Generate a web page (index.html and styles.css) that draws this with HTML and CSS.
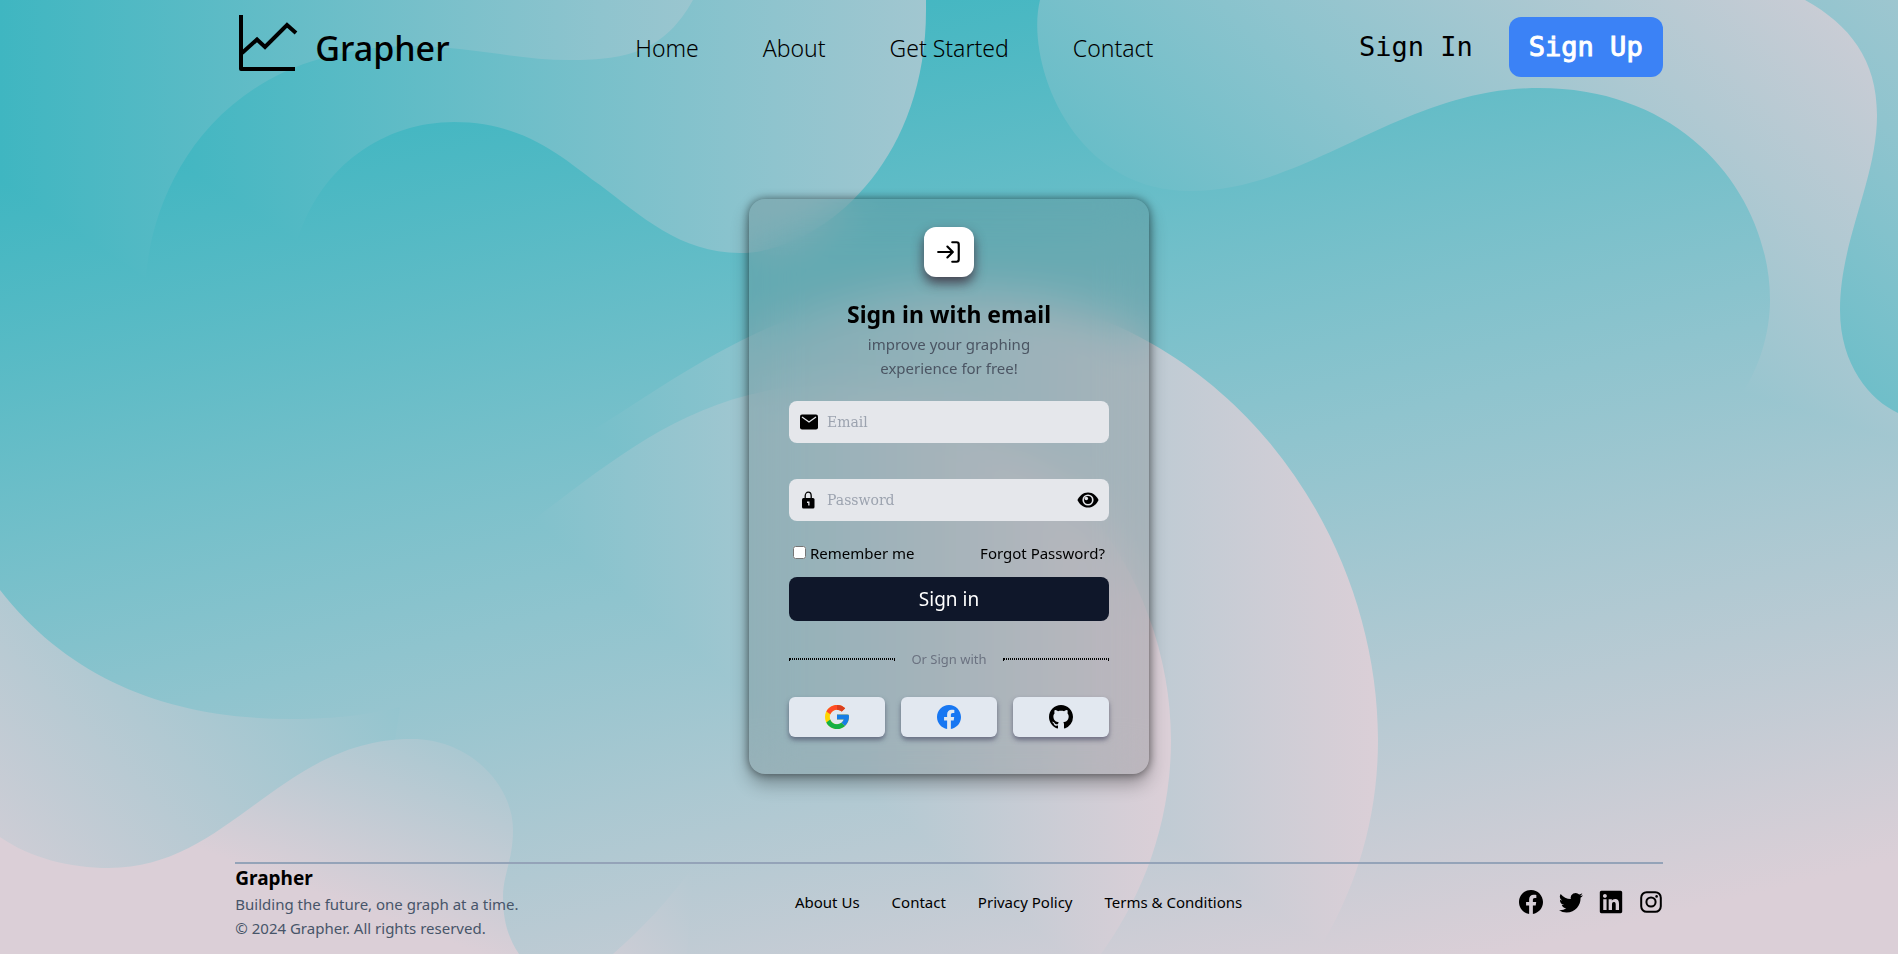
FILE: index.html
```html
<!DOCTYPE html>
<html lang="en">
<head>
<meta charset="utf-8">
<meta name="viewport" content="width=device-width, initial-scale=1">
<title>Grapher</title>
<link rel="stylesheet" href="styles.css">
</head>
<body>
<svg class="backdrop" viewBox="0 0 1898 954" preserveAspectRatio="none" aria-hidden="true">
  <defs>
    <linearGradient id="tones"><stop offset="0" stop-color="#3fb6c1"/><stop offset=".5" stop-color="#8fc4ce"/><stop offset="1" stop-color="#dbcfd7"/></linearGradient>
    <linearGradient id="base" href="#tones" gradientUnits="userSpaceOnUse" x1="0" y1="180" x2="258" y2="1254"/>
    <linearGradient id="tl1" href="#tones" gradientUnits="userSpaceOnUse" x1="0" y1="0" x2="1205" y2="0"/>
    <linearGradient id="tl2" href="#tones" gradientUnits="userSpaceOnUse" x1="150" y1="0" x2="1400" y2="0"/>
    <linearGradient id="tr1" href="#tones" gradientUnits="userSpaceOnUse" x1="1239" y1="681" x2="1953" y2="-33"/>
    <linearGradient id="tr2" href="#tones" gradientUnits="userSpaceOnUse" x1="1473" y1="427" x2="2187" y2="-287"/>
    <linearGradient id="mid1" href="#tones" gradientUnits="userSpaceOnUse" x1="174" y1="0" x2="1378" y2="0"/>
    <linearGradient id="mid2" href="#tones" gradientUnits="userSpaceOnUse" x1="90" y1="0" x2="1165" y2="0"/>
    <linearGradient id="bl1" href="#tones" gradientUnits="userSpaceOnUse" x1="628" y1="172" x2="-86" y2="886"/>
    <linearGradient id="bl2" href="#tones" gradientUnits="userSpaceOnUse" x1="551" y1="370" x2="352" y2="906"/>
    <linearGradient id="bl3" href="#tones" gradientUnits="userSpaceOnUse" x1="1110" y1="449" x2="554" y2="1005"/>
  </defs>
  <rect width="1898" height="954" fill="url(#base)"/>
  <path fill="url(#tl2)" d="M160 0V150L297 242C320 165 385 122 454 122C530 122 570 165 600 185C640 215 680 253 740 253C815 253 926 170 926 10V0Z"/>
  <path fill="url(#tl1)" d="M0 0V180L146 278C152 190 215 48 410 46C470 46 515 60 570 60C630 60 665 50 693 0Z"/>
  <path fill="url(#tr1)" d="M1040 0C1025 60 1070 191 1190 191C1310 191 1400 88 1539 88C1690 88 1770 200 1770 300C1770 335 1758 370 1742 393L1898 440V0Z"/>
  <path fill="url(#tr2)" d="M1805 0C1850 25 1877 60 1877 115C1877 180 1840 240 1840 310C1840 365 1870 400 1898 413V0Z"/>
  <path fill="url(#mid1)" d="M590 432C690 370 790 290 945 290C1210 290 1378 520 1378 740C1378 820 1355 890 1321 946Z"/>
  <path fill="url(#mid2)" d="M533 520C620 455 700 385 830 385C1030 385 1171 560 1171 740C1171 840 1130 920 1087 972Z"/>
  <path fill="url(#bl1)" d="M0 590C70 680 170 719 291 719C340 719 370 714 400 707L392 760L380 954H0Z"/>
  <path fill="url(#bl2)" d="M0 837C30 858 70 868 109 868C230 868 280 739 412 739C470 739 513 785 513 830C513 860 503 875 503 897C503 920 508 938 519 954H0Z"/>
  <path fill="url(#bl3)" d="M694 865C670 900 640 930 613 954H687Z"/>
</svg>

<div class="page">
  <header class="header">
    <a class="brand" href="#">
      <svg class="brand-icon" viewBox="0 0 64 64" fill="none" stroke="currentColor" stroke-width="4" stroke-linejoin="round" aria-hidden="true">
        <path d="M6 3V57H60"/><path d="M7 41 22 27.500 30 35 52 13 61 21" stroke-linejoin="miter"/>
      </svg>
      <span class="brand-name">Grapher</span>
    </a>
    <nav class="main-nav" aria-label="Main">
      <a href="#">Home</a>
      <a href="#">About</a>
      <a href="#">Get Started</a>
      <a href="#">Contact</a>
    </nav>
    <div class="account">
      <button class="account-button" type="button">Sign In</button>
      <button class="account-button account-button-primary" type="button">Sign Up</button>
    </div>
  </header>

  <main class="main">
    <form class="card">
      <div class="card-badge">
        <svg class="badge-icon" viewBox="0 0 24 24" fill="none" stroke="currentColor" stroke-width="2" stroke-linecap="round" stroke-linejoin="round" aria-hidden="true">
          <path d="M15 3h4a2 2 0 0 1 2 2v14a2 2 0 0 1-2 2h-4"/><path d="M10.500 17 15.500 12 10.500 7"/><path d="M15 12H2"/>
        </svg>
      </div>
      <h1 class="card-title">Sign in with email</h1>
      <p class="card-text">improve your graphing<br>experience for free!</p>

      <div class="field">
        <svg class="field-icon" viewBox="0 0 20 20" aria-hidden="true">
          <rect x="1" y="2.500" width="18" height="15" rx="2" fill="#000"/>
          <path d="M3 5 10 10 17 5" fill="none" stroke="#e5e7eb" stroke-width="1.300"/>
        </svg>
        <input class="field-input" type="email" placeholder="Email" aria-label="Email">
      </div>
      <div class="field">
        <svg class="field-icon" viewBox="0 0 20 20" aria-hidden="true">
          <path d="M6.200 9V6a3 3.800 0 0 1 6 0V9" fill="none" stroke="#000" stroke-width="1.300"/>
          <rect x="3" y="8" width="12.500" height="10.500" rx="1.500" fill="#000"/>
          <path d="M8 11.500h2.500V15.500H9.200V13H8z" fill="#e5e7eb"/>
        </svg>
        <input class="field-input" type="password" placeholder="Password" aria-label="Password">
        <button class="reveal" type="button" aria-label="Show password">
          <svg class="reveal-icon" viewBox="0 0 24 24" aria-hidden="true">
            <path d="M12 3.700C6.500 3.700 2.500 7.500 .5 12c2 4.500 6 8.300 11.500 8.300s9.500-3.800 11.500-8.300C21.500 7.500 17.500 3.700 12 3.700z"/>
            <circle cx="12" cy="12" r="5.200" fill="#000" stroke="#e5e7eb" stroke-width="1.800"/>
            <circle cx="10.200" cy="10.300" r="1.900" fill="#e5e7eb"/>
          </svg>
        </button>
      </div>

      <div class="options">
        <label class="remember"><input class="remember-box" type="checkbox">Remember me</label>
        <a href="#">Forgot Password?</a>
      </div>
      <button class="submit" type="submit">Sign in</button>

      <div class="divider">
        <hr class="divider-line"><span>Or Sign with</span><hr class="divider-line">
      </div>

      <div class="providers">
        <button class="provider" type="button" aria-label="Google">
          <svg class="icon" viewBox="4 4 40 40" aria-hidden="true">
            <path fill="#ffd500" d="M43.611,20.083H42V20H24v8h11.303c-1.649,4.657-6.080,8-11.303,8c-6.627,0-12-5.373-12-12c0-6.627,5.373-12,12-12c3.059,0,5.842,1.154,7.961,3.039l5.657-5.657C34.046,6.053,29.268,4,24,4C12.955,4,4,12.955,4,24c0,11.045,8.955,20,20,20c11.045,0,20-8.955,20-20C44,22.659,43.862,21.350,43.611,20.083z"/>
            <path fill="#ff4b26" d="M6.306,14.691l6.571,4.819C14.655,15.108,18.961,12,24,12c3.059,0,5.842,1.154,7.961,3.039l5.657-5.657C34.046,6.053,29.268,4,24,4C16.318,4,9.656,8.337,6.306,14.691z"/>
            <path fill="#d93f21" d="M24 4v8c3.059,0,5.842,1.154,7.961,3.039l5.657-5.657C34.046,6.053,29.268,4,24,4z"/>
            <path fill="#14b045" d="M24,44c5.166,0,9.860-1.977,13.409-5.192l-6.190-5.238C29.211,35.091,26.715,36,24,36c-5.202,0-9.619-3.317-11.283-7.946l-6.522,5.025C9.505,39.556,16.227,44,24,44z"/>
            <path fill="#167ee6" d="M43.611,20.083H42V20H24v8h11.303c-0.792,2.237-2.231,4.166-4.087,5.571l6.190,5.238C36.971,39.205,44,34,44,24C44,22.659,43.862,21.350,43.611,20.083z"/>
          </svg>
        </button>
        <button class="provider provider-facebook" type="button" aria-label="Facebook">
          <svg class="icon" viewBox="0 0 16 16" fill="currentColor" aria-hidden="true"><use href="#facebook"/></svg>
        </button>
        <button class="provider" type="button" aria-label="GitHub">
          <svg class="icon" viewBox="0 0 16 16" fill="currentColor" aria-hidden="true"><path d="M8 0C3.580 0 0 3.580 0 8c0 3.540 2.290 6.530 5.470 7.590.4.070.55-.17.55-.38 0-.19-.01-.82-.01-1.490-2.010.37-2.530-.49-2.690-.94-.09-.23-.48-.94-.82-1.130-.28-.15-.68-.52-.01-.53.63-.01 1.080.58 1.230.82.72 1.210 1.870.87 2.330.66.070-.52.28-.87.51-1.070-1.780-.2-3.640-.89-3.640-3.950 0-.87.31-1.590.82-2.150-.08-.2-.36-1.020.08-2.120 0 0 .67-.21 2.200.82.64-.18 1.320-.27 2-.27s1.360.09 2 .27c1.530-1.040 2.200-.82 2.200-.82.44 1.100.16 1.920.08 2.120.51.56.82 1.270.82 2.150 0 3.070-1.870 3.750-3.650 3.950.29.25.54.73.54 1.480 0 1.070-.01 1.930-.01 2.200 0 .21.15.46.55.38A8.010 8.010 0 0 0 16 8c0-4.420-3.580-8-8-8z"/></svg>
        </button>
      </div>
    </form>
  </main>

  <footer class="footer">
    <div class="footer-about">
      <p class="footer-title">Grapher</p>
      <p>Building the future, one graph at a time.</p>
      <p>© 2024 Grapher. All rights reserved.</p>
    </div>
    <nav class="footer-nav" aria-label="Footer">
      <a href="#">About Us</a>
      <a href="#">Contact</a>
      <a href="#">Privacy Policy</a>
      <a href="#">Terms &amp; Conditions</a>
    </nav>
    <div class="social">
      <a href="#" aria-label="Facebook"><svg class="icon" viewBox="0 0 16 16" fill="currentColor" aria-hidden="true"><path id="facebook" d="M16 8.049c0-4.446-3.582-8.050-8-8.050C3.580 0-.002 3.603-.002 8.050c0 4.017 2.926 7.347 6.750 7.951v-5.625h-2.030V8.050H6.750V6.275c0-2.017 1.195-3.131 3.022-3.131.876 0 1.791.157 1.791.157v1.980h-1.009c-.993 0-1.303.621-1.303 1.258v1.510h2.218l-.354 2.326H9.250V16c3.824-.604 6.750-3.934 6.750-7.951z"/></svg></a>
      <a href="#" aria-label="Twitter"><svg class="icon" viewBox="0 0 16 16" fill="currentColor" aria-hidden="true"><path d="M5.026 15c6.038 0 9.341-5.003 9.341-9.334 0-.14 0-.282-.006-.422A6.685 6.685 0 0 0 16 3.542a6.658 6.658 0 0 1-1.889.518 3.301 3.301 0 0 0 1.447-1.817 6.533 6.533 0 0 1-2.087.793A3.286 3.286 0 0 0 7.875 6.030a9.325 9.325 0 0 1-6.767-3.429 3.289 3.289 0 0 0 1.018 4.382A3.323 3.323 0 0 1 .64 6.575v.045a3.288 3.288 0 0 0 2.632 3.218 3.203 3.203 0 0 1-.865.115 3.230 3.230 0 0 1-.614-.057 3.283 3.283 0 0 0 3.067 2.277A6.588 6.588 0 0 1 .78 13.580a6.320 6.320 0 0 1-.78-.045A9.344 9.344 0 0 0 5.026 15z"/></svg></a>
      <a href="#" aria-label="LinkedIn"><svg class="icon" viewBox="-16 16 480 480" fill="currentColor" aria-hidden="true"><path d="M416 32H31.900C14.300 32 0 46.500 0 64.300v383.400C0 465.500 14.300 480 31.900 480H416c17.600 0 32-14.500 32-32.300V64.300c0-17.800-14.400-32.300-32-32.300zM135.400 416H69V202.200h66.500V416zm-33.200-243c-21.300 0-38.500-17.300-38.500-38.500S80.900 96 102.200 96c21.200 0 38.500 17.300 38.500 38.500 0 21.300-17.200 38.500-38.500 38.500zm282.100 243h-66.400V312c0-24.800-.5-56.700-34.500-56.700-34.600 0-39.900 27-39.900 54.900V416h-66.400V202.200h63.700v29.200h.9c8.900-16.800 30.600-34.500 62.900-34.500 67.200 0 79.700 44.300 79.700 101.900V416z"/></svg></a>
      <a href="#" aria-label="Instagram"><svg class="icon" viewBox="0 0 24 24" fill="none" stroke="currentColor" stroke-width="2" aria-hidden="true"><rect x="2.200" y="2.200" width="19.600" height="19.600" rx="5.500"/><circle cx="12" cy="12" r="4.600"/><circle cx="17.600" cy="6.400" r="1.300" fill="currentColor" stroke="none"/></svg></a>
    </div>
  </footer>
</div>
</body>
</html>
```

FILE: styles.css
```css
*,
*::before,
*::after {
  box-sizing: border-box;
}

body {
  margin: 0;
  position: relative;
  color: #000;
  background: #3fb6c1;
  font-family: "Noto Sans", "Open Sans", sans-serif;
  font-size: 15px;
  line-height: 24px;
}

a {
  color: inherit;
  text-decoration: none;
}

button,
input {
  font: inherit;
  color: inherit;
}

button {
  border: 0;
  padding: 0;
  background: none;
  cursor: pointer;
}

p,
h1 {
  margin: 0;
}

.backdrop {
  position: absolute;
  inset: 0;
  width: 100%;
  height: 100%;
}

.page {
  position: relative;
  display: flex;
  flex-direction: column;
  min-height: 100vh;
  padding: 0 12.4%;
}

.icon {
  display: block;
  width: 24px;
  height: 24px;
}

.header {
  display: flex;
  align-items: center;
  justify-content: space-between;
  padding: 11px 0;
}

.brand {
  display: flex;
  align-items: center;
  gap: 16px;
}

.brand-icon {
  width: 64px;
  height: 64px;
}

.brand-name {
  font-size: 34px;
  font-weight: 500;
  line-height: 40px;
  padding-top: 8px;
}

.main-nav {
  display: flex;
  gap: 64px;
  padding-top: 8px;
  font-size: 23px;
  line-height: 32px;
  font-weight: 300;
}

.account {
  display: flex;
  gap: 16px;
  padding-top: 6px;
}

.account-button {
  height: 60px;
  padding: 0 20px;
  border-radius: 12px;
  font-family: "DejaVu Sans Mono", monospace;
  font-size: 27px;
}

.account-button-primary {
  color: #fff;
  background: #3b82f6;
  -webkit-text-stroke: 1px #fff;
}

.main {
  flex: 1;
  display: flex;
  align-items: center;
  justify-content: center;
  padding-top: 22px;
}

.card {
  display: flex;
  flex-direction: column;
  width: 400px;
  padding: 28px 40px 37px;
  border-radius: 16px;
  background: rgba(80, 88, 92, 0.2);
  backdrop-filter: blur(24px);
  box-shadow: 0 10px 18px rgba(0, 0, 0, 0.3), 0 0 10px rgba(0, 0, 0, 0.5);
}

.card-badge {
  display: grid;
  place-items: center;
  align-self: center;
  width: 50px;
  height: 50px;
  border-radius: 12px;
  background: #fff;
  box-shadow: 0 6px 12px rgba(50, 20, 35, 0.7);
}

.badge-icon {
  width: 26px;
  height: 26px;
}

.card-title {
  margin-top: 19px;
  font-size: 23px;
  line-height: 36px;
  font-weight: 700;
  text-align: center;
}

.card-text {
  margin-bottom: 21px;
  color: #4b5563;
  text-align: center;
}

.field {
  display: flex;
  align-items: center;
  gap: 8px;
  height: 42px;
  margin-bottom: 36px;
  padding: 0 10px;
  border-radius: 8px;
  background: #e5e7eb;
}

.field-icon {
  width: 20px;
  height: 20px;
}

.field-input {
  flex: 1;
  min-width: 0;
  border: 0;
  padding: 0;
  outline: 0;
  background: transparent;
  font-family: "DejaVu Serif", serif;
  font-size: 14px;
}

.field-input::placeholder {
  color: #9ca3af;
}

.reveal-icon {
  display: block;
  width: 22px;
  height: 22px;
}

.options {
  display: flex;
  justify-content: space-between;
  margin-top: -16px;
  padding: 0 4px;
}

.remember {
  display: flex;
  align-items: center;
  gap: 4px;
}

.remember-box {
  width: 13px;
  height: 13px;
  margin: 0;
}

.submit {
  height: 44px;
  margin-top: 12px;
  border-radius: 8px;
  color: #fff;
  background: #0f172a;
  font-size: 19px;
}

.divider {
  display: flex;
  align-items: center;
  gap: 16px;
  margin: 26px 0;
  color: #6b7280;
  font-size: 13px;
}

.divider-line {
  flex: 1;
  height: 2px;
  margin: 0;
  border: 1px dotted #000;
}

.providers {
  display: grid;
  grid-template-columns: repeat(3, 1fr);
  gap: 16px;
}

.provider {
  display: grid;
  place-items: center;
  height: 40px;
  border-radius: 6px;
  background: #e2e8f0;
  box-shadow: 0 3px 5px rgba(60, 60, 90, 0.6);
}

.provider-facebook {
  color: #1877f2;
}

.footer {
  display: flex;
  align-items: center;
  justify-content: space-between;
  padding-bottom: 14px;
  border-top: 2px solid #94a3b8;
}

.footer-about {
  color: #475569;
}

.footer-title {
  color: #000;
  font-size: 19px;
  line-height: 28px;
  font-weight: 700;
}

.footer-nav {
  display: flex;
  gap: 32px;
}

.social {
  display: flex;
  gap: 16px;
}
```
